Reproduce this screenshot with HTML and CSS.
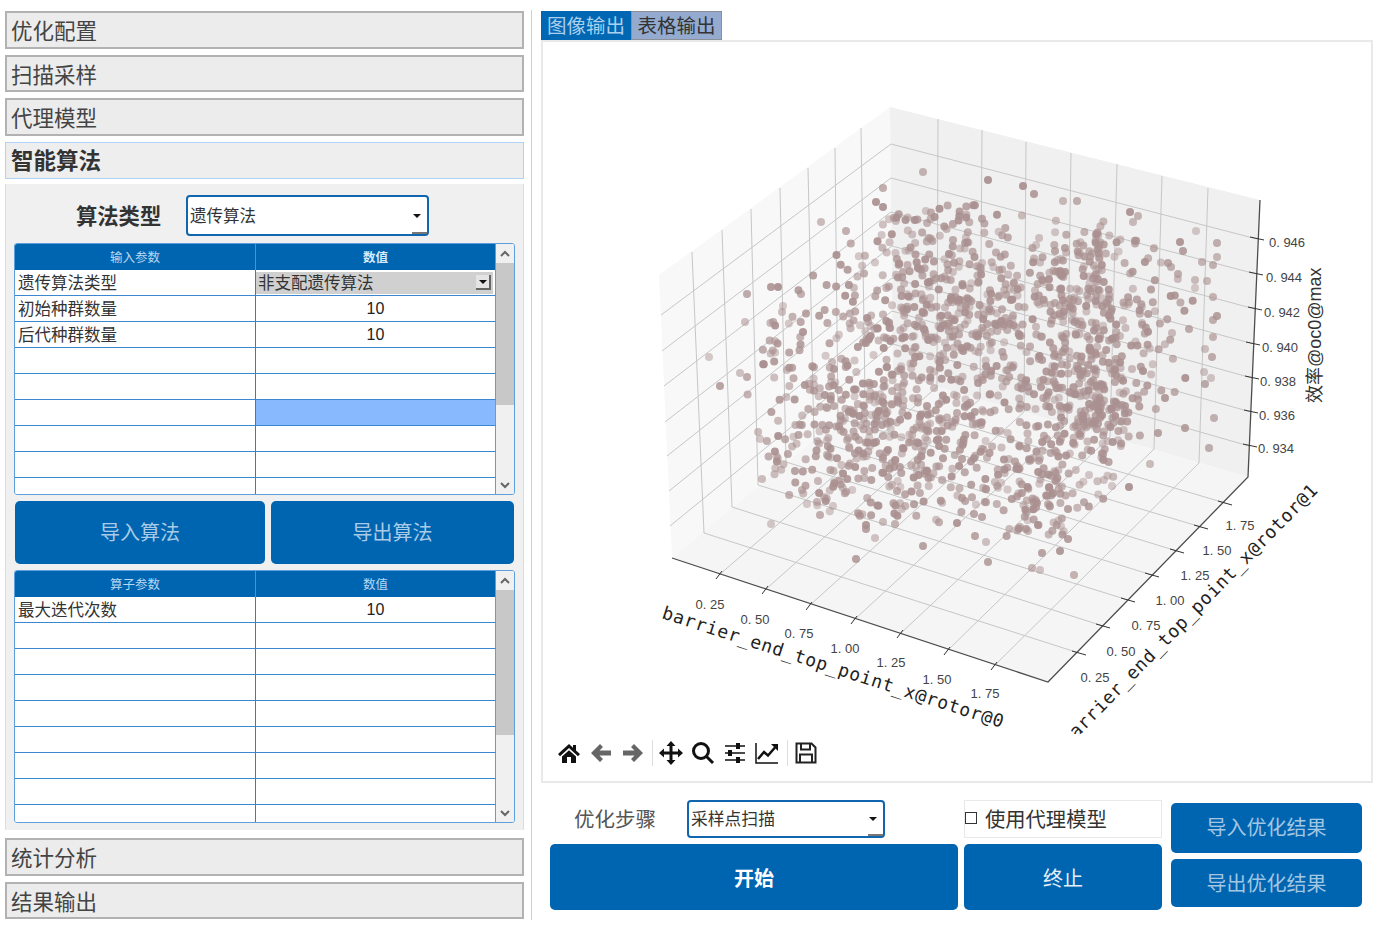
FILE: index.html
```html
<!DOCTYPE html>
<html lang="zh-CN">
<head>
<meta charset="utf-8">
<title>优化配置</title>
<link rel="stylesheet" href="styles.css">
</head>
<body>
<div class="app">
  <aside class="side">
    <div class="acc">优化配置</div>
    <div class="acc">扫描采样</div>
    <div class="acc">代理模型</div>
    <div class="acc acc-active">智能算法</div>
    <section class="acc-body">
      <div class="type-row">
        <span class="type-label">算法类型</span>
        <div class="combo combo-type">遗传算法</div>
      </div>
      <div class="tbl">
        <table>
          <thead><tr><th>输入参数</th><th class="strong">数值</th></tr></thead>
          <tbody>
            <tr><td>遗传算法类型</td><td class="pick"><span>非支配遗传算法</span><i class="pick-btn"></i></td></tr>
            <tr><td>初始种群数量</td><td class="num">10</td></tr>
            <tr><td>后代种群数量</td><td class="num">10</td></tr>
            <tr><td></td><td></td></tr>
            <tr><td></td><td></td></tr>
            <tr><td></td><td class="sel"></td></tr>
            <tr><td></td><td></td></tr>
            <tr><td></td><td></td></tr>
            <tr><td></td><td></td></tr>
          </tbody>
        </table>
        <div class="sb">
          <svg class="sb-arrow" viewBox="0 0 12 8" width="12" height="8"><path d="M2 6l4-4 4 4"/></svg>
          <div class="sb-track"><div class="sb-thumb"></div></div>
          <svg class="sb-arrow" viewBox="0 0 12 8" width="12" height="8"><path d="M2 2l4 4 4-4"/></svg>
        </div>
      </div>
      <div class="btn-row">
        <button class="btn btn-a">导入算法</button>
        <button class="btn btn-b">导出算法</button>
      </div>
      <div class="tbl tbl-2">
        <table>
          <thead><tr><th>算子参数</th><th>数值</th></tr></thead>
          <tbody>
            <tr><td>最大迭代次数</td><td class="num">10</td></tr>
            <tr><td></td><td></td></tr>
            <tr><td></td><td></td></tr>
            <tr><td></td><td></td></tr>
            <tr><td></td><td></td></tr>
            <tr><td></td><td></td></tr>
            <tr><td></td><td></td></tr>
            <tr><td></td><td></td></tr>
            <tr><td></td><td></td></tr>
          </tbody>
        </table>
        <div class="sb">
          <svg class="sb-arrow" viewBox="0 0 12 8" width="12" height="8"><path d="M2 6l4-4 4 4"/></svg>
          <div class="sb-track"><div class="sb-thumb thumb-2"></div></div>
          <svg class="sb-arrow" viewBox="0 0 12 8" width="12" height="8"><path d="M2 2l4 4 4-4"/></svg>
        </div>
      </div>
    </section>
    <div class="acc acc-after">统计分析</div>
    <div class="acc">结果输出</div>
  </aside>

  <main class="main">
    <div class="tabs">
      <div class="tab tab-on">图像输出</div>
      <div class="tab tab-off">表格输出</div>
    </div>
    <div class="pane">
      <svg class="plot" viewBox="543 42 828 692" width="828" height="692">
        <polygon class="wall-l" points="659,275 890,107 893,374 672,558"/>
        <polygon class="wall-r" points="890,107 1260,200 1248,477 893,374"/>
        <polygon class="floor" points="672,558 893,374 1248,477 1048,682"/>
        <path class="grid" d="M692 252L704 533M722 230L732 507M751 209L758 485M780 188L786 462M808 168L814 440M835 148L838 418M861 128L865 396
          M938 119L937 387M982 130L980 399M1026 142L1024 412M1071 153L1067 424M1117 164L1110 437M1162 176L1154 449M1208 188L1199 463
          M661 315L891 144L1257 239M662 351L891 178L1256 274M664 386L891 212L1255 309M665 422L892 246L1254 344M667 456L892 278L1252 378M669 491L892 311L1251 412M670 526L893 344L1249 446
          M719 575L937 387M765 590L980 399M809 606L1024 412M854 620L1067 424M900 634L1110 437M947 651L1154 449M994 666L1199 463
          M1079 653L704 533M1103 626L732 507M1128 600L758 485M1152 575L786 462M1177 551L814 440M1201 527L838 418M1225 503L865 396"/>
        <g id="points" class="cloud"></g>
        <path class="axis" d="M672 558L1048 682L1248 477L1260 200"/>
        <path class="tick" d="M1250 237L1264 240M1249 272L1263 275M1248 307L1262 310M1246 342L1260 345M1245 376L1259 379M1244 410L1258 413M1243 444L1257 447
          M716 579L722 571M762 594L768 586M806 610L812 602M851 624L857 616M897 638L903 630M944 655L950 647M991 670L997 662
          M1072 651L1086 655M1096 624L1110 628M1121 598L1135 602M1145 573L1159 577M1170 549L1184 553M1194 525L1208 529M1218 501L1232 505"/>
        <g class="tl">
          <text x="710" y="604">0. 25</text><text x="755" y="619">0. 50</text><text x="799" y="633">0. 75</text><text x="845" y="648">1. 00</text><text x="891" y="662">1. 25</text><text x="937" y="679">1. 50</text><text x="985" y="693">1. 75</text>
          <text x="1095" y="677">0. 25</text><text x="1121" y="651">0. 50</text><text x="1146" y="625">0. 75</text><text x="1170" y="600">1. 00</text><text x="1195" y="575">1. 25</text><text x="1217" y="550">1. 50</text><text x="1240" y="525">1. 75</text>
          <text x="1287" y="242">0. 946</text><text x="1284" y="277">0. 944</text><text x="1282" y="312">0. 942</text><text x="1280" y="347">0. 940</text><text x="1278" y="381">0. 938</text><text x="1277" y="415">0. 936</text><text x="1276" y="448">0. 934</text>
        </g>
        <text class="al" transform="translate(661 618) rotate(17.9)">barrier_end_top_point_x@rotor@0</text>
        <text class="al al-end" transform="translate(1319 491) rotate(-45.6)">barrier_end_top_point_x@rotor@1</text>
        <text class="zl" transform="translate(1321 403) rotate(-90)">效率@oc0@max</text>
      </svg>
      <div class="toolbar">
        <span class="tool"><svg viewBox="0 0 24 24" width="24" height="24"><path class="ink" d="M12 3L1 13l2 2.2L12 7l9 8.2 2-2.2-4-3.6V4h-3v2.7zM5 15.6V22h5v-6h4v6h5v-6.4l-7-6.3z"/></svg></span>
        <span class="tool"><svg viewBox="0 0 24 24" width="24" height="24"><path class="gray" d="M2 12l9-9 3 3-3.500 3.500H22v5H10.500L14 18l-3 3z"/></svg></span>
        <span class="tool"><svg viewBox="0 0 24 24" width="24" height="24"><path class="gray" d="M22 12l-9-9-3 3 3.500 3.500H2v5h11.500L10 18l3 3z"/></svg></span>
        <span class="sep"></span>
        <span class="tool"><svg viewBox="0 0 24 24" width="24" height="24"><path class="ink" d="M12 0l4.500 5H13.500v5.500H19V7.500l5 4.500-5 4.500v-3h-5.500V19h3L12 24l-4.500-5h3v-5.500H5v3L0 12l5-4.500v3h5.500V5h-3z"/></svg></span>
        <span class="tool"><svg viewBox="0 0 24 24" width="24" height="24"><circle class="line" cx="10" cy="10" r="7.500"/><path class="line" d="M15.500 15.500L22 22"/></svg></span>
        <span class="tool"><svg viewBox="0 0 24 24" width="24" height="24"><path class="thin" d="M2 5h20M2 12h20M2 19h20"/><path class="ink" d="M13 2h4v6h-4zM5 9h4v6H5zM13 16h4v6h-4z"/></svg></span>
        <span class="tool"><svg viewBox="0 0 24 24" width="24" height="24"><path class="thin" d="M1 2v20h22"/><path class="line-2" d="M3 18l6-7 4 3.500 7-8"/><path class="ink" d="M16 3h7v7z"/></svg></span>
        <span class="sep sep-2"></span>
        <span class="tool"><svg viewBox="0 0 24 24" width="24" height="24"><path class="save" d="M2.500 2.500h15l4 4v15h-19z"/><path class="save" d="M7 2.500v6h9v-6M6 21.500v-8h12v8"/></svg></span>
      </div>
    </div>
    <div class="controls">
      <div class="step">
        <span class="step-label">优化步骤</span>
        <div class="combo combo-step">采样点扫描</div>
      </div>
      <label class="check"><i class="check-box"></i>使用代理模型</label>
      <div class="io">
        <button class="btn btn-io btn-io-a">导入优化结果</button>
        <button class="btn btn-io btn-io-b">导出优化结果</button>
      </div>
      <button class="btn btn-main">开始</button>
      <button class="btn btn-stop">终止</button>
    </div>
  </main>
</div>
<script src="plot.js"></script>
</body>
</html>
```
FILE: styles.css
```css
* { box-sizing: border-box; }
html, body { margin: 0; height: 100%; background: #fff; overflow: hidden; }
body { font-family: "Noto Sans CJK SC", "Liberation Sans", sans-serif; color: #333; }
.app { display: flex; height: 925px; }

/* left accordion */
.side { width: 532px; height: 910px; margin-top: 10px; padding: 1px 7px 0 5px; border-right: 1px solid #cfcfcf; flex: none; display: flex; flex-direction: column; }
.acc { height: 37.5px; margin-bottom: 6px; flex: none; padding-left: 4px; background: #ececec; border: 2px solid #b2b2b2; font-size: 21.500px; line-height: 33px; color: #444; }
.acc-active { margin-bottom: 5px; padding-left: 5px; border-color: #b0d2f4; font-size: 22.500px; font-weight: 700; color: #333; background: #eeeeee; border-width: 1.500px; }
.acc-after { margin-top: 8px; }
.acc-body { height: 646px; flex: none; background: #f0f0f0; padding: 11px 8px 0; border-left: 1px solid #ddd; border-right: 1px solid #ddd; }
.type-row { display: flex; align-items: center; height: 41px; margin-bottom: 7px; }
.type-label { width: 172px; padding: 0 0 3px 62px; font-size: 21.300px; font-weight: 700; color: #333; white-space: nowrap; }

.combo { position: relative; background: #fff; border: 2px solid #0f66ae; border-radius: 4px; padding: 0 0 2px 2px; font-size: 16.500px; color: #333; display: flex; align-items: center; }
.combo::before { content: ""; position: absolute; right: 6px; top: 50%; margin-top: -2px; border: 4px solid transparent; border-top: 4px solid #111; border-bottom: 0; }
.combo::after { content: ""; position: absolute; right: 0; bottom: 0; width: 15px; height: 2px; background: #777; }
.combo-type { width: 243px; height: 41px; }
.combo-step { width: 198px; height: 38px; font-size: 16.800px; }

.tbl { display: flex; height: 252px; background: #fff; border: 1px solid #5d9fdb; border-radius: 3px; overflow: hidden; }
.tbl-2 { height: 253px; }
table { width: 481px; height: 260px; flex: none; border-collapse: separate; border-spacing: 0; table-layout: fixed; align-self: flex-start; }
th { height: 26px; padding: 0 0 2px; background: #0065b1; color: #b8d8f2; font-size: 12.500px; font-weight: 400; border-right: 1px solid #6a8aa5; }
th:first-child { width: 241px; }
th.strong { font-weight: 700; color: #d8ebfa; }
td { height: 26px; padding: 0 0 0 3px; border-right: 1px solid #2f80cc; border-bottom: 1px solid #3a88d2; font-size: 16.500px; line-height: 23px; color: #333; white-space: nowrap; overflow: hidden; background: #fff; }
th:last-child, td:last-child { border-right: 1px solid #5d9fdb; }
td.num { text-align: center; font-family: "Liberation Sans", sans-serif; font-size: 16px; color: #222; padding: 0; line-height: 25px; }
td.sel { background: #88b8fe; }
td.pick { position: relative; padding: 0 0 0 2px; }
td.pick span { display: block; background: #d0d0d0; margin: 1px 2px 1px -2px; padding-left: 2px; height: 22px; line-height: 20px; }
.pick-btn { position: absolute; right: 4px; top: 5px; width: 15px; height: 15px; background: #e4e4e4; border-right: 2px solid #666; border-bottom: 2px solid #666; }
.pick-btn::after { content: ""; position: absolute; left: 3px; top: 5px; border: 4px solid transparent; border-top: 4px solid #111; border-bottom: 0; }

.sb { flex: 1; display: flex; flex-direction: column; align-items: center; background: #f0f0f0; }
.sb-arrow { flex: none; margin: 6px 0 5px; }
.sb-arrow path { fill: none; stroke: #666; stroke-width: 2; }
.sb-track { flex: 1; width: 100%; }
.sb-thumb { height: 142px; background: #c8c8c8; }
.thumb-2 { height: 145px; }

.btn { border: 0; padding: 0 0 2px; border-radius: 5px; background: #0065b1; font-family: inherit; font-size: 20px; color: #a9cbe6; display: block; }
.btn-row { display: flex; gap: 6px; margin: 6px 1px; }
.btn-a { width: 250px; height: 63px; }
.btn-b { width: 243px; height: 63px; }

/* right side */
.main { flex: none; width: 850px; padding: 11px 0 0 9px; display: flex; flex-direction: column; }
.tabs { display: flex; height: 29px; flex: none; }
.tab { width: 91px; text-align: center; font-size: 19.500px; line-height: 26px; border: 1px solid #8a8f98; }
.tab-on { width: 90px; background: #0067b3; color: #a9d0ef; border-color: #0067b3; }
.tab-off { background: #94abcf; color: #333; }
.pane { width: 832px; height: 743px; flex: none; border: 2px solid #e9e9e9; background: #fff; }
.plot { display: block; }
.wall-l { fill: #f8f8f8; }
.wall-r { fill: #f0f0f0; }
.floor { fill: #f5f5f5; }
.grid { fill: none; stroke: #c6c6c6; stroke-width: 1; }
.axis { fill: none; stroke: #4d4d4d; stroke-width: 1.300; }
.tick { fill: none; stroke: #333; stroke-width: 1; }
.cloud { filter: blur(.4px); }
.pt { fill: #aa9090; }
.tl text { font-family: "Liberation Sans", sans-serif; font-size: 13px; fill: #444; text-anchor: middle; dominant-baseline: central; }
.al { font-family: "DejaVu Sans Mono", monospace; font-size: 18px; letter-spacing: .72px; fill: #222; }
.al-end { text-anchor: end; }
.zl { font-family: "Liberation Sans", "Noto Sans CJK SC", sans-serif; font-size: 18px; fill: #333; }

.toolbar { display: flex; align-items: center; padding: 3px 0 13px 10px; height: 47px; }
.tool { width: 32px; height: 31px; display: flex; align-items: center; justify-content: center; flex: none; }
.sep { width: 1px; height: 26px; background: #dddddd; margin: 0 2px 0 3px; flex: none; }
.sep-2 { margin: 0 2px 0 4px; }
.ink { fill: #111; }
.gray { fill: #666; }
.line { fill: none; stroke: #111; stroke-width: 3; }
.line-2 { fill: none; stroke: #111; stroke-width: 2.500; }
.thin { fill: none; stroke: #111; stroke-width: 1.500; }
.save { fill: none; stroke: #222; stroke-width: 2; }

.controls { margin-top: 17px; margin-left: 9px; display: grid; grid-template-columns: 408px 204px 200px; grid-template-rows: 38px 66px; row-gap: 6px; width: 812px; }
.controls > :nth-child(2), .controls > .btn-stop { margin-left: 6px; width: 198px; }
.step { display: flex; align-items: center; }
.step-label { width: 113px; margin-left: 24px; padding-bottom: 2px; flex: none; font-size: 20.500px; color: #555; }
.check { display: flex; align-items: center; padding-bottom: 2px; background: #fff; border: 1px solid #e8e8e8; font-size: 20.300px; color: #333; white-space: nowrap; }
.check-box { width: 12px; height: 12px; border: 1px solid #333; margin: 0 8px 0 0; flex: none; }
.io { grid-row: 1 / span 2; grid-column: 3; padding: 3px 0 0 9px; display: flex; flex-direction: column; gap: 6px; }
.btn-io { width: 191px; color: #a3c6e2; }
.btn-io-a { height: 50px; padding-bottom: 3px; }
.btn-io-b { height: 48px; }
.btn-main { color: #fff; font-weight: 700; grid-row: 2; grid-column: 1; padding: 0; }
.btn-stop { color: #e6f0f8; grid-row: 2; grid-column: 2; padding: 0; }
```
FILE: plot.js
```js
(function () {
  var NS = "http://www.w3.org/2000/svg";
  var layer = document.getElementById("points");

  // sampled coordinates of the isolated points of the cloud
  var fixed = [923,172,988,180,883,188,876,202,883,207,821,222,846,231,747,294,771,287,778,287,801,294,745,322,709,357,783,306,782,312,740,373,747,377,720,386,
    1023,186,1034,194,1063,201,1077,201,1130,212,1138,216,1133,222,1196,231,1217,243,1180,242,1183,251,1217,257,1213,265,1202,262,1171,267,1178,274,1195,280,1207,281,1195,288,1213,297,1217,316,1213,320,1213,337,1189,329,1172,333,1205,349,1212,357,1204,372,1211,378,1205,384,
    856,559,923,546,988,562,1032,568,1040,570,1074,575,1042,553,1060,551,975,536,986,542,875,538,866,525,866,529,883,522,895,524,957,523,771,524,974,514,982,517,1020,527,1028,531,1038,525,1068,539,820,515,817,502,833,506,802,490,762,479,795,471,1209,448,1214,418,1185,428,1158,433,1150,464,1129,487,1112,486];

  var inner = [[900,205],[1010,205],[1135,225],[1195,285],[1190,400],[1135,450],[1085,530],[1020,545],[930,520],[850,525],[785,495],[745,420],[745,340],[815,265]];
  var clusters = [[945,295,42,45,230],[1085,310,32,55,230],[1088,410,22,30,120],[880,395,40,40,130],[1030,480,24,32,70],[875,450,50,35,80],[1000,370,70,70,100],[955,460,45,40,50],[810,400,36,40,40]];

  var seed = 20240611;
  function rnd() {
    seed = (seed + 0x6D2B79F5) | 0;
    var t = Math.imul(seed ^ (seed >>> 15), 1 | seed);
    t = (t + Math.imul(t ^ (t >>> 7), 61 | t)) ^ t;
    return ((t ^ (t >>> 14)) >>> 0) / 4294967296;
  }
  function gauss() {
    return Math.sqrt(-2 * Math.log(rnd() + 1e-9)) * Math.cos(6.2831853 * rnd());
  }
  function inside(x, y, poly) {
    var hit = false;
    for (var i = 0, j = poly.length - 1; i < poly.length; j = i++) {
      var a = poly[i], b = poly[j];
      if ((a[1] > y) !== (b[1] > y) && x < (b[0] - a[0]) * (y - a[1]) / (b[1] - a[1]) + a[0]) hit = !hit;
    }
    return hit;
  }
  function add(x, y) {
    var c = document.createElementNS(NS, "circle");
    c.setAttribute("class", "pt");
    c.setAttribute("cx", x.toFixed(1));
    c.setAttribute("cy", y.toFixed(1));
    c.setAttribute("r", "4");
    c.setAttribute("fill-opacity", (0.45 + rnd() * 0.5).toFixed(2));
    layer.appendChild(c);
  }

  var i, n, x, y;
  for (i = 0; i < clusters.length; i++) {
    var k = clusters[i];
    for (n = 0; n < k[4];) {
      x = k[0] + gauss() * k[2];
      y = k[1] + gauss() * k[3];
      if (inside(x, y, inner)) { add(x, y); n++; }
    }
  }
  for (n = 0; n < 480;) {
    x = 745 + rnd() * 450;
    y = 205 + rnd() * 340;
    if (inside(x, y, inner)) { add(x, y); n++; }
  }
  for (i = 0; i < fixed.length; i += 2) add(fixed[i], fixed[i + 1]);
})();
```
